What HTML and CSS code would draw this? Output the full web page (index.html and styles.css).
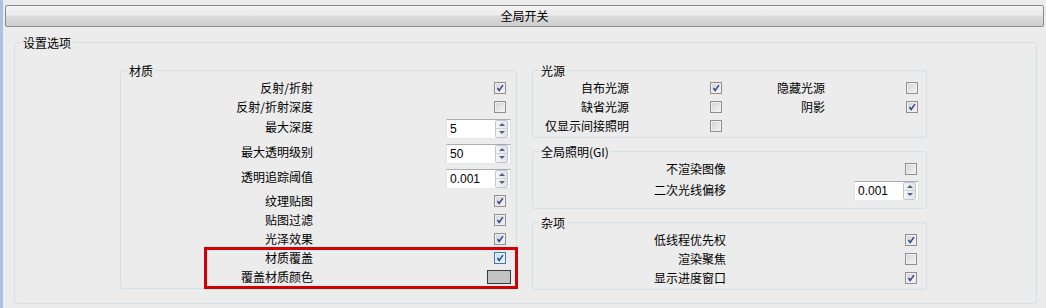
FILE: index.html
```html
<!DOCTYPE html>
<html lang="zh-CN">
<head>
  <meta charset="UTF-8" />
  <title>全局开关</title>
  <link rel="stylesheet" href="styles.css">
</head>
<body>
  <div class="window">
    <div class="toggle-bar">全局开关</div>
    <fieldset class="group outer">
      <legend>设置选项</legend>
      <div class="columns">
        <fieldset class="group material">
          <legend>材质</legend>
          <div class="group-body">
            <div class="row"><span class="name">反射/折射</span><span class="cb on"><svg viewBox="0 0 12 12"><polyline points="3,6 5,9 9.5,2.5"/></svg></span></div>
            <div class="row"><span class="name">反射/折射深度</span><span class="cb"></span></div>
            <div class="row tall"><span class="name">最大深度</span><span class="spin"><span class="val">5</span><span class="arrows"><i class="up"></i><i class="down"></i></span></span></div>
            <div class="row tall"><span class="name">最大透明级别</span><span class="spin"><span class="val">50</span><span class="arrows"><i class="up"></i><i class="down"></i></span></span></div>
            <div class="row tall"><span class="name">透明追踪阈值</span><span class="spin"><span class="val">0.001</span><span class="arrows"><i class="up"></i><i class="down"></i></span></span></div>
            <div class="row"><span class="name">纹理贴图</span><span class="cb on"><svg viewBox="0 0 12 12"><polyline points="3,6 5,9 9.5,2.5"/></svg></span></div>
            <div class="row"><span class="name">贴图过滤</span><span class="cb on"><svg viewBox="0 0 12 12"><polyline points="3,6 5,9 9.5,2.5"/></svg></span></div>
            <div class="row"><span class="name">光泽效果</span><span class="cb on"><svg viewBox="0 0 12 12"><polyline points="3,6 5,9 9.5,2.5"/></svg></span></div>
            <div class="row"><span class="name">材质覆盖</span><span class="cb on hot"><svg viewBox="0 0 12 12"><polyline points="3,6 5,9 9.5,2.5"/></svg></span></div>
            <div class="row"><span class="name">覆盖材质颜色</span><span class="swatch"></span></div>
          </div>
        </fieldset>
        <div class="right-col">
          <fieldset class="group">
            <legend>光源</legend>
            <div class="group-body lights">
              <span class="name">自布光源</span><span class="cb on"><svg viewBox="0 0 12 12"><polyline points="3,6 5,9 9.5,2.5"/></svg></span>
              <span class="name">隐藏光源</span><span class="cb"></span>
              <span class="name">缺省光源</span><span class="cb"></span>
              <span class="name">阴影</span><span class="cb on"><svg viewBox="0 0 12 12"><polyline points="3,6 5,9 9.5,2.5"/></svg></span>
              <span class="name">仅显示间接照明</span><span class="cb"></span>
            </div>
          </fieldset>
          <fieldset class="group gi">
            <legend>全局照明(GI)</legend>
            <div class="group-body">
              <div class="row"><span class="name">不渲染图像</span><span class="cb"></span></div>
              <div class="row tall"><span class="name">二次光线偏移</span><span class="spin"><span class="val">0.001</span><span class="arrows"><i class="up"></i><i class="down"></i></span></span></div>
            </div>
          </fieldset>
          <fieldset class="group misc">
            <legend>杂项</legend>
            <div class="group-body">
              <div class="row"><span class="name">低线程优先权</span><span class="cb on"><svg viewBox="0 0 12 12"><polyline points="3,6 5,9 9.5,2.5"/></svg></span></div>
              <div class="row"><span class="name">渲染聚焦</span><span class="cb"></span></div>
              <div class="row"><span class="name">显示进度窗口</span><span class="cb on"><svg viewBox="0 0 12 12"><polyline points="3,6 5,9 9.5,2.5"/></svg></span></div>
            </div>
          </fieldset>
        </div>
        <div class="highlight"></div>
      </div>
    </fieldset>
  </div>
</body>
</html>
```

FILE: styles.css
```css
html, body {
  margin: 0;
  padding: 0;
  background: #ececec;
  font-family: "Noto Sans CJK SC", "Liberation Sans", sans-serif;
  font-size: 12px;
  color: #000;
}
.window {
  border-left: 3px solid #a8c3e6;
  display: flex;
  flex-direction: column;
  overflow: hidden;
}
.toggle-bar {
  margin: 5px 2px 0 2px;
  height: 20px;
  line-height: 20px;
  text-align: center;
  border: 1px solid #8c8c8c;
  border-radius: 2px;
  background: linear-gradient(#f4f4f4, #ebebeb 45%, #dcdcdc 52%, #cdcdcd);
}
.group {
  margin: 0;
  padding: 0;
  min-width: 0;
  border: 1px solid #d5dfe5;
  border-radius: 3px;
}
.group legend {
  margin-left: 6px;
  padding: 0 2px;
  line-height: 15px;
  height: 15px;
}
.outer {
  margin: 8px 9px 4px 11px;
}
.columns {
  position: relative;
  display: flex;
  align-items: flex-start;
  gap: 15px;
  padding: 13px 0 13px 105px;
}
.material {
  width: 397px;
  box-sizing: border-box;
}
.group-body {
  padding-bottom: 2px;
}
.right-col {
  width: 395px;
  display: flex;
  flex-direction: column;
  gap: 6px;
}
.gi .group-body {
  padding-bottom: 5px;
}
.row {
  display: flex;
  align-items: center;
  height: 19px;
}
.row.tall {
  height: 25px;
}
.name {
  white-space: nowrap;
  text-align: right;
}
.material .name {
  width: 192px;
}
.material .tall .name {
  padding-bottom: 5px;
}
.gi .name, .misc .name {
  width: 193px;
}
.gi .tall .name {
  padding-bottom: 2px;
}
.row > .cb, .row > .spin, .row > .swatch {
  margin-left: auto;
}
.material .row > .cb {
  margin-right: 10px;
}
.material .row > .spin, .material .row > .swatch {
  margin-right: 5px;
}
.gi .row > .cb, .misc .row > .cb {
  margin-right: 9px;
}
.gi .row > .spin {
  margin-right: 7px;
}
.lights {
  display: grid;
  grid-template-columns: 96px 93px 103px 93px;
  grid-auto-rows: 19px;
  align-items: center;
}
.lights .cb {
  justify-self: end;
}
.cb {
  display: inline-block;
  box-sizing: border-box;
  width: 12px;
  height: 12px;
  border: 1px solid #8f8f8f;
  background: linear-gradient(135deg, #d2d4d8, #f5f5f5);
  box-shadow: inset 0 0 0 1px #f0f0f0;
}
.cb svg {
  display: block;
  width: 10px;
  height: 10px;
}
.cb polyline {
  fill: none;
  stroke: #2d3f8e;
  stroke-width: 1.7;
}
.cb.hot {
  border-color: #3d7bb8;
  background: linear-gradient(135deg, #bfe0f5, #eef8fd);
}
.spin {
  display: flex;
  box-sizing: border-box;
  width: 65px;
  height: 20px;
  border: 1px solid #abadb3;
  border-color: #abadb3 #dbdfe6 #e3e9ef #e2e3ea;
  background: #fff;
  align-items: center;
}
.spin .val {
  flex: 1;
  padding-left: 3px;
  font-family: "Liberation Sans", sans-serif;
}
.arrows {
  display: flex;
  flex-direction: column;
  width: 11px;
  height: 16px;
  margin-right: 2px;
  border: 1px solid #c3c6cc;
  border-radius: 2px;
  background: linear-gradient(90deg, #f6f6f6, #e4e4e4);
}
.arrows i {
  flex: 1;
  display: flex;
  align-items: center;
  justify-content: center;
}
.arrows i.up {
  border-bottom: 1px solid #cfd2d7;
}
.arrows i::after {
  content: "";
  border-left: 3px solid transparent;
  border-right: 3px solid transparent;
}
.arrows i.up::after {
  border-bottom: 3px solid #4b5f8c;
}
.arrows i.down::after {
  border-top: 3px solid #4b5f8c;
}
.swatch {
  display: inline-block;
  box-sizing: border-box;
  width: 24px;
  height: 14px;
  border: 1px solid #3a3a3a;
  background: #c3c3c3;
}
.highlight {
  position: absolute;
  left: 189px;
  top: 197px;
  width: 314px;
  height: 42px;
  box-sizing: border-box;
  border: 3px solid #d20000;
}
```
